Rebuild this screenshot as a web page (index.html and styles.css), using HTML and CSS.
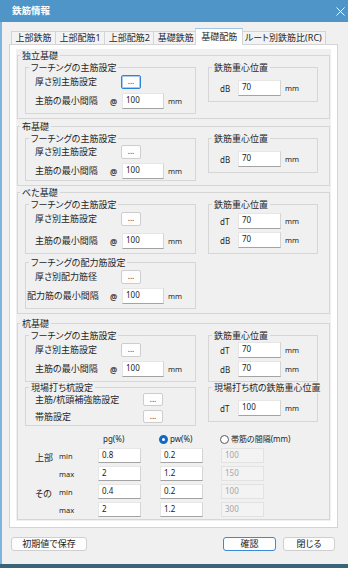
FILE: index.html
```html
<!DOCTYPE html>
<html lang="ja">
  <head>
    <title>鉄筋情報</title>
    <meta charset="UTF-8" />
    <meta name="viewport" content="width=device-width" />
    <link rel="stylesheet" href="styles.css">
  </head>
  <body>
    <div class="window">
      <!-- title bar -->
      <div class="titlebar">
        <span class="title">鉄筋情報</span>
        <svg class="close" width="9" height="9" viewBox="0 0 9 9">
          <path d="M0.5 0.5 L8.5 8.5 M8.5 0.5 L0.5 8.5" stroke="#fff" stroke-width="1" fill="none" />
        </svg>
      </div>

      <div class="client">
        <!-- tabs -->
        <div class="tabs">
          <span class="tab">上部鉄筋</span>
          <span class="tab">上部配筋1</span>
          <span class="tab">上部配筋2</span>
          <span class="tab">基礎鉄筋</span>
          <span class="tab active">基礎配筋</span>
          <span class="tab">ルート別鉄筋比(RC)</span>
        </div>

        <div class="panel">
          <div class="scroll">

            <!-- 独立基礎 -->
            <fieldset class="sec" id="sec-dokuritsu">
              <legend>独立基礎</legend>
              <div class="sec-grid">
                <fieldset class="sub">
                  <legend>フーチングの主筋設定</legend>
                  <div class="row"><span class="lbl">厚さ別主筋設定</span><span></span><button class="dots focus">...</button></div>
                  <div class="row"><span class="lbl">主筋の最小間隔</span><span class="at">@</span><input class="num" value="100"><span class="unit">mm</span></div>
                </fieldset>
                <fieldset class="sub cg one">
                  <legend>鉄筋重心位置</legend>
                  <div class="row cg-row"><span class="key">dB</span><input class="num" value="70"><span class="unit">mm</span></div>
                </fieldset>
              </div>
            </fieldset>

            <!-- 布基礎 -->
            <fieldset class="sec" id="sec-nuno">
              <legend>布基礎</legend>
              <div class="sec-grid">
                <fieldset class="sub tight">
                  <legend>フーチングの主筋設定</legend>
                  <div class="row"><span class="lbl">厚さ別主筋設定</span><span></span><button class="dots">...</button></div>
                  <div class="row"><span class="lbl">主筋の最小間隔</span><span class="at">@</span><input class="num" value="100"><span class="unit">mm</span></div>
                </fieldset>
                <fieldset class="sub cg one">
                  <legend>鉄筋重心位置</legend>
                  <div class="row cg-row"><span class="key">dB</span><input class="num" value="70"><span class="unit">mm</span></div>
                </fieldset>
              </div>
            </fieldset>

            <!-- べた基礎 -->
            <fieldset class="sec" id="sec-beta">
              <legend>べた基礎</legend>
              <div class="sec-grid">
                <fieldset class="sub loose">
                  <legend>フーチングの主筋設定</legend>
                  <div class="row"><span class="lbl">厚さ別主筋設定</span><span></span><button class="dots">...</button></div>
                  <div class="row"><span class="lbl">主筋の最小間隔</span><span class="at">@</span><input class="num" value="100"><span class="unit">mm</span></div>
                </fieldset>
                <fieldset class="sub cg mid">
                  <legend>鉄筋重心位置</legend>
                  <div class="row cg-row"><span class="key">dT</span><input class="num" value="70"><span class="unit">mm</span></div>
                  <div class="row cg-row"><span class="key">dB</span><input class="num" value="70"><span class="unit">mm</span></div>
                </fieldset>
                <fieldset class="sub">
                  <legend>フーチングの配力筋設定</legend>
                  <div class="row"><span class="lbl">厚さ別配力筋径</span><span></span><button class="dots">...</button></div>
                  <div class="row"><span class="lbl wide">配力筋の最小間隔</span><span class="at">@</span><input class="num" value="100"><span class="unit">mm</span></div>
                </fieldset>
              </div>
            </fieldset>

            <!-- 杭基礎 -->
            <fieldset class="sec" id="sec-kui">
              <legend>杭基礎</legend>
              <div class="sec-grid">
                <fieldset class="sub">
                  <legend>フーチングの主筋設定</legend>
                  <div class="row"><span class="lbl">厚さ別主筋設定</span><span></span><button class="dots">...</button></div>
                  <div class="row"><span class="lbl">主筋の最小間隔</span><span class="at">@</span><input class="num" value="100"><span class="unit">mm</span></div>
                </fieldset>
                <fieldset class="sub cg">
                  <legend>鉄筋重心位置</legend>
                  <div class="row cg-row"><span class="key">dT</span><input class="num" value="70"><span class="unit">mm</span></div>
                  <div class="row cg-row"><span class="key">dB</span><input class="num" value="70"><span class="unit">mm</span></div>
                </fieldset>
                <fieldset class="sub compact">
                  <legend>現場打ち杭設定</legend>
                  <div class="row pile-row"><span class="lbl">主筋/杭頭補強筋設定</span><button class="dots">...</button></div>
                  <div class="row pile-row"><span class="lbl">帯筋設定</span><button class="dots">...</button></div>
                </fieldset>
                <fieldset class="sub cg one">
                  <legend>現場打ち杭の鉄筋重心位置</legend>
                  <div class="row cg-row"><span class="key">dT</span><input class="num" value="100"><span class="unit">mm</span></div>
                </fieldset>

                <!-- 鉄筋比 -->
                <div class="ratio">
                  <span></span><span></span>
                  <span class="hd pg">pg(%)</span>
                  <span class="hd opt"><span class="radio on"></span>pw(%)</span>
                  <span class="hd opt"><span class="radio"></span>帯筋の間隔(mm)</span>

                  <span class="grp">上部</span><span class="mm">min</span>
                  <input class="num t" value="0.8"><input class="num t" value="0.2"><input class="num t" value="100" disabled>

                  <span></span><span class="mm">max</span>
                  <input class="num t" value="2"><input class="num t" value="1.2"><input class="num t" value="150" disabled>

                  <span class="grp">その</span><span class="mm">min</span>
                  <input class="num t" value="0.4"><input class="num t" value="0.2"><input class="num t" value="100" disabled>

                  <span></span><span class="mm">max</span>
                  <input class="num t" value="2"><input class="num t" value="1.2"><input class="num t" value="300" disabled>
                </div>
              </div>
            </fieldset>

          </div>
        </div>

        <!-- dialog buttons -->
        <div class="footer">
          <button class="btn btn-save">初期値で保存</button>
          <button class="btn btn-ok">確認</button>
          <button class="btn btn-close">閉じる</button>
        </div>
      </div>
    </div>
  </body>
</html>
```

FILE: styles.css
```css
* {
  box-sizing: border-box;
}

body {
  margin: 0;
  font-family: "Noto Sans", "Noto Sans CJK JP", sans-serif;
  font-size: 9px;
  font-feature-settings: "palt";
  color: #1f1f1f;
}

/* window frame */
.window {
  width: 348px;
  height: 568px;
  display: flex;
  flex-direction: column;
  background-color: #f0f0f0;
  border-bottom: 4px solid #3a6479;
}

.titlebar {
  flex: none;
  height: 22px;
  display: flex;
  align-items: center;
  padding: 0 3px 0 12px;
  background-color: #4f95c8;
  color: #fff;
}

.title {
  font-size: 9.5px;
  font-weight: bold;
  line-height: 12px;
}

.close {
  margin-left: auto;
}

.client {
  flex: 1;
  display: flex;
  flex-direction: column;
  padding-top: 6px;
  border-left: 2px solid #7cb6e0;
}

/* tabs */
.tabs {
  height: 16px;
  display: flex;
  align-items: flex-end;
  padding-left: 10px;
}

.tab {
  height: 13px;
  margin-left: -1px;
  padding: 0 3.5px;
  border: 1px solid #d4d4d4;
  border-bottom: none;
  background-color: #f3f3f3;
  line-height: 12px;
  white-space: nowrap;
}

.tab.active {
  position: relative;
  z-index: 1;
  height: 17px;
  margin: 0 -2px -1px -3px;
  padding: 0 5px;
  background-color: #fff;
  border-top-color: #9fc4e6;
  line-height: 15px;
}

.panel {
  height: 484px;
  margin: 0 10px 0 7px;
  padding: 4px 6px 6px;
  display: flex;
  flex-direction: column;
  border: 1px solid #d4d4d4;
  background-color: #fff;
}

.scroll {
  flex: 1;
  background-color: #f0f0f0;
}

/* group boxes */
fieldset {
  margin: 0;
  min-width: 0;
  border: 1px solid #d6d6d6;
}

legend {
  padding: 0 2px;
  line-height: 11px;
  white-space: nowrap;
}

.sec {
  margin: 2px 1px 0;
  padding: 1px 10px 4px 7px;
}

.sec > legend {
  margin-left: -5px;
}

#sec-dokuritsu {
  margin-top: 1px;
}

#sec-beta {
  margin-top: 1px;
}

#sec-kui {
  margin-top: 4px;
  padding-bottom: 2px;
}

.sec-grid {
  display: grid;
  grid-template-columns: 171px 110px;
  column-gap: 12px;
  row-gap: 3px;
  align-items: start;
}

#sec-kui .sec-grid {
  row-gap: 0;
}

.sub {
  padding: 1px 4px 4px 9px;
}

.sub > legend {
  margin-left: -6px;
}

.sub.tight {
  padding-top: 0;
  padding-bottom: 1px;
}

.sub.compact {
  padding-top: 0;
  padding-bottom: 2px;
}

.sub.cg {
  padding-left: 11px;
}

.sub.cg > legend {
  margin-left: -8px;
}

.sub.cg.one {
  padding-top: 7px;
  padding-bottom: 5px;
}

.sub.cg.mid {
  padding-top: 3px;
  padding-bottom: 5px;
}

/* rows inside the group boxes */
.row {
  height: 16px;
  display: grid;
  grid-template-columns: 75px 12px 42px auto;
  align-items: center;
  white-space: nowrap;
}

.row + .row {
  margin-top: 3px;
}

.sub.loose .row + .row {
  margin-top: 6px;
}

.pile-row {
  height: 13px;
  grid-template-columns: 108px 20px;
}

.sub.compact .row + .row {
  margin-top: 4px;
}

.cg-row {
  grid-template-columns: 18px 43px auto;
}

.lbl {
  line-height: 12px;
}

.lbl.wide {
  margin-left: -8px;
}

.at {
  font-size: 8px;
  font-weight: bold;
  color: #444;
}

.key {
  font-size: 8px;
}

.unit {
  margin-left: 4px;
  font-size: 7.5px;
}

/* controls */
.dots {
  width: 20px;
  height: 14px;
  margin-left: -1px;
  padding: 0 0 2px;
  border: 1px solid #cdcdcd;
  border-radius: 2px;
  background-color: #fdfdfd;
  font: 8px "Noto Sans", sans-serif;
  line-height: 8px;
  color: #333;
}

.pile-row .dots {
  height: 13px;
  margin-left: 0;
}

.dots.focus {
  border-color: #2f82d6;
  box-shadow: inset 0 0 0 1px #a6cbef;
}

.num {
  width: 42px;
  height: 16px;
  margin: 0;
  padding: 0 3px 3px;
  border: 1px solid #e6e6e6;
  border-right-color: #d4d4d4;
  border-bottom-color: #a3a3a3;
  background-color: #fff;
  font: 8px "Noto Sans", sans-serif;
  color: #222;
  outline: none;
}

.cg-row .num {
  width: 43px;
}

/* pg / pw table */
.ratio {
  grid-column: 1 / -1;
  margin: 7px 0 0 10px;
  display: grid;
  grid-template-columns: 24px 39px 62px 61px 43px;
  grid-template-rows: 12px repeat(4, 15px);
  row-gap: 3px;
  align-items: center;
  white-space: nowrap;
}

.ratio .hd {
  font-size: 8px;
  line-height: 12px;
}

.ratio .pg {
  padding-left: 5px;
}

.ratio .opt {
  display: flex;
  align-items: center;
  gap: 2px;
  margin-left: -1px;
}

.radio {
  flex: none;
  width: 9px;
  height: 9px;
  border: 1px solid #5a5a5a;
  border-radius: 50%;
  background-color: #fff;
}

.radio.on {
  border: 3px solid #1469c0;
}

.grp {
  align-self: end;
  line-height: 10px;
}

.mm {
  font-size: 7.5px;
  line-height: 10px;
}

.num.t {
  width: 43px;
  height: 15px;
  padding-bottom: 2px;
}

.num.t:disabled {
  border-color: #e2e2e2;
  background-color: #f3f3f3;
  color: #a6a6a6;
}

/* dialog buttons */
.footer {
  display: flex;
  gap: 7px;
  padding: 9px 13px 0 9px;
}

.btn {
  height: 14px;
  padding: 0;
  border: 1px solid #cfcfcf;
  border-radius: 3px;
  background-color: #fdfdfd;
  font: inherit;
  line-height: 12px;
  color: #222;
}

.btn-save {
  width: 76px;
}

.btn-ok {
  width: 53px;
  margin-left: auto;
  border-color: #3b8ad8;
}

.btn-close {
  width: 52px;
}
```
